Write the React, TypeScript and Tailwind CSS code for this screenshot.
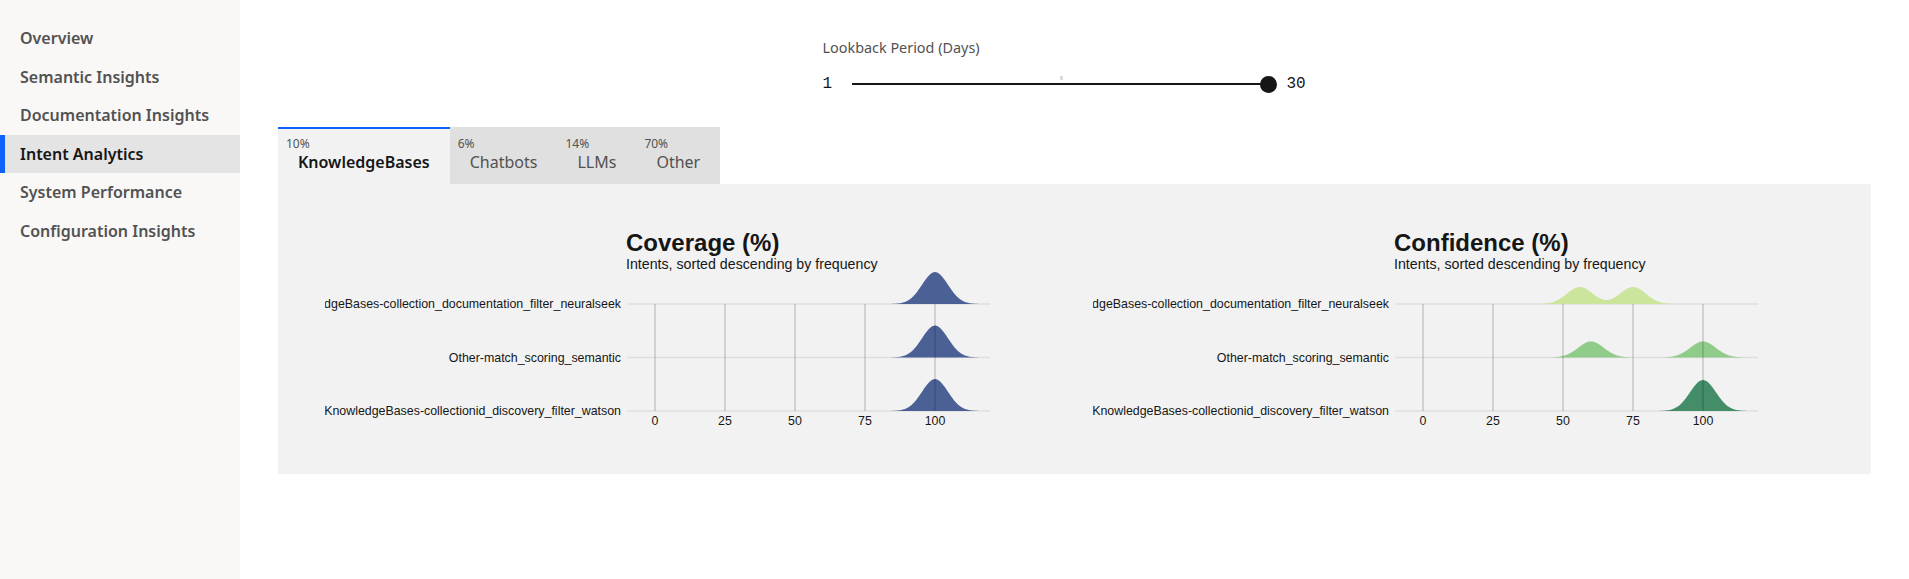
import React from "react";

type Peak = { mu: number; h: number };
type Row = { label: string; peaks: Peak[] };

const NAV = [
  "Overview",
  "Semantic Insights",
  "Documentation Insights",
  "Intent Analytics",
  "System Performance",
  "Configuration Insights",
];

const TABS = [
  { pct: "10%", label: "KnowledgeBases", active: true },
  { pct: "6%", label: "Chatbots" },
  { pct: "14%", label: "LLMs" },
  { pct: "70%", label: "Other" },
];

const LABELS = [
  "KnowledgeBases-collection_documentation_filter_neuralseek",
  "Other-match_scoring_semantic",
  "KnowledgeBases-collectionid_discovery_filter_watson",
];

// chart geometry (px inside the svg)
const X0 = 330;
const K = 2.8;
const sx = (u: number) => X0 + u * K;
const BASES = [32, 85.5, 139];
const TICKS = [0, 25, 50, 75, 100];

function ridgePath(peaks: Peak[], base: number, sigma = 4.6) {
  let d = `M ${sx(-10)} ${base}`;
  for (let u = -10; u <= 120; u += 0.5) {
    const v = peaks.reduce(
      (s, p) => s + p.h * Math.exp(-((u - p.mu) ** 2) / (2 * sigma * sigma)),
      0
    );
    d += ` L ${sx(u).toFixed(2)} ${(base - v).toFixed(2)}`;
  }
  return d + ` L ${sx(120)} ${base} Z`;
}

function RidgeChart({
  title,
  rows,
  colors,
  id,
}: {
  title: string;
  rows: Row[];
  colors: string[];
  id: string;
}) {
  return (
    <div className="w-[665px] shrink-0">
      <div className="ml-[301px] font-['Liberation_Sans',Arial,sans-serif] text-[#161616]">
        <div className="text-[24px] leading-[26px] font-bold">{title}</div>
        <div className="text-[14.2px] leading-[16px]">Intents, sorted descending by frequency</div>
      </div>
      <svg width={665} height={160} overflow="visible" className="block">
        <defs>
          <clipPath id={id}>
            <rect x={0} y={-20} width={300} height={200} />
          </clipPath>
        </defs>
        {BASES.map((b) => (
          <line key={b} x1={302} x2={665} y1={b} y2={b} stroke="#dfdfdf" strokeWidth={1.5} />
        ))}
        {rows.map((r, i) => (
          <path key={i} d={ridgePath(r.peaks, BASES[i])} fill={colors[i]} />
        ))}
        {TICKS.map((t) => (
          <line
            key={t}
            x1={sx(t)}
            x2={sx(t)}
            y1={BASES[0]}
            y2={BASES[2]}
            stroke="#000"
            strokeOpacity={0.2}
            strokeWidth={1.3}
          />
        ))}
        <g
          clipPath={`url(#${id})`}
          fontFamily="'Liberation Sans', Arial, sans-serif"
          fontSize={12.4}
          fill="#161616"
        >
          {rows.map((r, i) => (
            <text key={i} x={296} y={BASES[i] + 4.4} textAnchor="end">
              {r.label}
            </text>
          ))}
        </g>
        <g fontFamily="'Liberation Sans', Arial, sans-serif" fontSize={12.4} fill="#161616">
          {TICKS.map((t) => (
            <text key={t} x={sx(t)} y={153} textAnchor="middle">
              {t}
            </text>
          ))}
        </g>
      </svg>
    </div>
  );
}

export default function App() {
  const coverage: Row[] = LABELS.map((label) => ({ label, peaks: [{ mu: 100, h: 32 }] }));
  const confidence: Row[] = [
    { label: LABELS[0], peaks: [{ mu: 56, h: 17 }, { mu: 75, h: 17 }] },
    { label: LABELS[1], peaks: [{ mu: 60, h: 16 }, { mu: 100, h: 16 }] },
    { label: LABELS[2], peaks: [{ mu: 100, h: 31 }] },
  ];

  return (
    <div className="flex h-screen w-full bg-white font-['Noto_Sans',sans-serif]">
      <aside className="w-[240px] shrink-0 bg-[#f9f8f7] pt-[19px]">
        {NAV.map((item) =>
          item === "Intent Analytics" ? (
            <div
              key={item}
              className="flex h-[38.5px] items-center border-l-[5px] border-[#0f62fe] bg-[#e4e4e4] pl-[15px] text-[16px] font-semibold text-[#161616]"
            >
              {item}
            </div>
          ) : (
            <div
              key={item}
              className="flex h-[38.5px] items-center pl-5 text-[16px] font-semibold text-[#525252]"
            >
              {item}
            </div>
          )
        )}
      </aside>

      <main className="flex-1 px-[38px]">
        <div className="mx-auto mt-[38px] w-[504px]">
          <div className="text-[14.4px] leading-[20px] text-[#525252]">Lookback Period (Days)</div>
          <div className="mt-4 flex h-5 items-center font-['Liberation_Mono',monospace] text-[16px] text-[#161616]">
            <span className="w-[29px]">1</span>
            <div className="relative flex flex-1 items-center">
              <div className="relative h-[2px] flex-1 bg-[#161616]">
                <span className="absolute left-1/2 top-[-7px] h-[4px] w-[3px] bg-[#dadada]" />
              </div>
              <div className="ml-[-9px] h-[17px] w-[17px] rounded-full bg-[#161616]" />
            </div>
            <span className="ml-[10px] w-[40px]">30</span>
          </div>
        </div>

        <div className="mt-[33px] flex">
          {TABS.map((t) => (
            <div
              key={t.label}
              className={
                t.active
                  ? "h-[57px] border-t-2 border-[#0f62fe] bg-[#f2f2f2]"
                  : "h-[57px] border-t-2 border-[#e0e0e0] bg-[#e0e0e0]"
              }
            >
              <div className="pl-2 pt-[7px] text-[12px] leading-[15px] text-[#525252]">{t.pct}</div>
              <div
                className={
                  t.active
                    ? "px-5 text-[16px] leading-[22px] font-semibold text-[#161616]"
                    : "px-5 text-[16px] leading-[22px] text-[#525252]"
                }
              >
                {t.label}
              </div>
            </div>
          ))}
        </div>

        <div className="flex h-[290px] gap-[103px] bg-[#f2f2f2] pl-[47px] pt-[46px]">
          <RidgeChart
            id="clip-cov"
            title="Coverage (%)"
            rows={coverage}
            colors={["#4b6196", "#4b6196", "#4b6196"]}
          />
          <RidgeChart
            id="clip-conf"
            title="Confidence (%)"
            rows={confidence}
            colors={["#cbe59d", "#8fcc8a", "#438d68"]}
          />
        </div>
      </main>
    </div>
  );
}
